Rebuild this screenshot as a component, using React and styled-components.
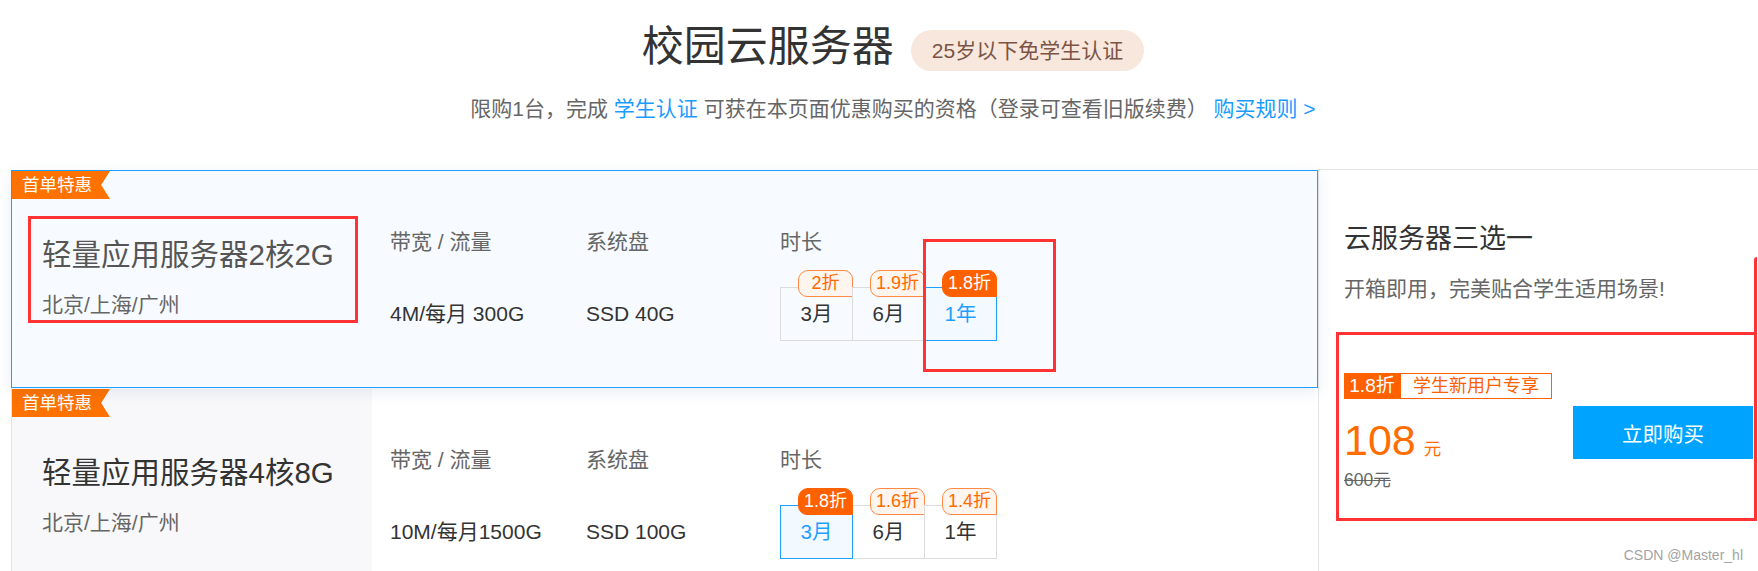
import React from 'react'
import styled, { createGlobalStyle } from 'styled-components'

const GlobalStyle = createGlobalStyle`
  html, body {
    margin: 0;
    padding: 0;
    background: #fff;
    overflow: hidden;
  }
  body {
    font-family: "Liberation Sans", "Noto Sans CJK SC", sans-serif;
    color: #333;
  }
`

const Page = styled.div`
  position: relative;
  width: 1775px;
  height: 571px;
  padding-left: 11px;
  box-sizing: border-box;
`

const Header = styled.header`
  padding-top: 22px;
  text-align: center;
`

const TitleRow = styled.div`
  display: flex;
  justify-content: center;
  align-items: center;
  gap: 17px;
  height: 50px;
`

const Title = styled.h1`
  margin: 0;
  font-size: 42px;
  font-weight: 400;
  line-height: 50px;
  color: #333;
`

const AgeBadge = styled.span`
  margin-top: 6px;
  height: 41px;
  line-height: 41px;
  padding: 0 21px;
  border-radius: 21px;
  background: #f8e7dd;
  color: #7b5444;
  font-size: 21px;
`

const Notice = styled.p`
  margin: 24px 0 0;
  font-size: 21px;
  line-height: 26px;
  color: #666;
`

const Link = styled.a`
  color: #1a9bff;
  text-decoration: none;
`

const Main = styled.div`
  display: flex;
  margin-top: 47px;
`

const CardList = styled.div`
  width: 1307px;
  flex-shrink: 0;
  padding-top: 1px;
`

const Card = styled.div`
  position: relative;
  z-index: ${p => (p.$active ? 1 : 0)};
  height: 218px;
  box-sizing: border-box;
  display: grid;
  grid-template-columns: 360px 196px 194px 1fr;
  border: 1px solid ${p => (p.$active ? '#1f9fff' : 'transparent')};
  border-left-color: ${p => (p.$active ? '#1f9fff' : '#e3e3e3')};
  background: ${p => (p.$active ? '#f7fbff' : '#fff')};
  box-shadow: ${p => (p.$active ? '0 4px 14px rgba(30, 80, 140, 0.10)' : 'none')};
`

const PromoTag = styled.div`
  position: absolute;
  top: 0;
  left: 0;
  width: 98px;
  height: 28px;
  box-sizing: border-box;
  padding-left: 10px;
  line-height: 28px;
  font-size: 17.5px;
  color: #fff;
  background: #ff7200;
  clip-path: polygon(0 0, 100% 0, 91% 50%, 100% 100%, 0 100%);
`

const Info = styled.div`
  padding: 65px 0 0 30px;
  background: ${p => (p.$active ? 'transparent' : '#f8f8fa')};
`

const ProductName = styled.div`
  font-size: 29.5px;
  line-height: 38px;
  color: ${p => (p.$active ? '#555' : '#333')};
  white-space: nowrap;
`

const Region = styled.div`
  margin-top: 18px;
  font-size: 21px;
  line-height: 26px;
  color: #666;
`

const Spec = styled.div`
  padding: 58px 0 0 18px;
`

const SpecLabel = styled.div`
  font-size: 21px;
  line-height: 26px;
  color: #666;
  white-space: nowrap;
`

const SpecValue = styled.div`
  margin-top: 46px;
  font-size: 21px;
  line-height: 26px;
  color: #333;
  white-space: nowrap;
`

const Periods = styled.div`
  display: flex;
  margin-top: 32px;
`

const Period = styled.div`
  position: relative;
  z-index: ${p => (p.$selected ? 1 : 0)};
  width: 73px;
  height: 54px;
  box-sizing: border-box;
  margin-left: -1px;
  border: 1px solid ${p => (p.$selected ? '#1f9fff' : '#dcdcdc')};
  background: ${p => (p.$selected ? '#f3faff' : 'transparent')};
  color: ${p => (p.$selected ? '#1f9fff' : '#333')};
  font-size: 20.5px;
  line-height: 52px;
  text-align: center;

  &:first-child {
    margin-left: 0;
  }
`

const Discount = styled.span`
  position: absolute;
  top: -18px;
  right: -1px;
  min-width: 55px;
  height: 27px;
  box-sizing: border-box;
  padding: 0 5px;
  border: 1px solid ${p => (p.$best ? '#ff6000' : '#ff8a45')};
  border-radius: 10px 9px 0 9px;
  background: ${p => (p.$best ? '#ff6000' : '#fff5ef')};
  color: ${p => (p.$best ? '#fff' : '#ff6a00')};
  font-size: 18px;
  line-height: 25px;
  text-align: center;
`

const Mark = styled.div`
  position: absolute;
  left: ${p => p.$left}px;
  top: ${p => p.$top}px;
  width: ${p => p.$w}px;
  height: ${p => p.$h}px;
  box-sizing: border-box;
  border: 3px solid #f33;
  pointer-events: none;
  z-index: 3;
`

const Side = styled.aside`
  flex: 1;
  border-top: 1px solid #e5e5e5;
  border-left: 1px solid #e5e5e5;
  padding: 51px 0 0 25px;
`

const SideTitle = styled.div`
  font-size: 27px;
  line-height: 36px;
  color: #333;
`

const SideText = styled.div`
  margin-top: 19px;
  font-size: 21px;
  line-height: 26px;
  color: #666;
`

const Offer = styled.div`
  position: relative;
  display: flex;
  justify-content: space-between;
  align-items: flex-start;
  width: 421px;
  height: 189px;
  box-sizing: border-box;
  margin: 30px 0 0 -8px;
  padding: 38px 1px 0 5px;
  border: 3px solid #f33;

  &::after {
    content: '';
    position: absolute;
    right: -3px;
    top: -78px;
    width: 3px;
    height: 78px;
    background: #f33;
    border-top-left-radius: 4px;
  }
`

const OfferTags = styled.div`
  display: flex;
  height: 26px;
`

const Rate = styled.span`
  width: 56px;
  background: #ff6000;
  color: #fff;
  font-size: 19px;
  line-height: 26px;
  text-align: center;
`

const Audience = styled.span`
  padding: 0 12px;
  border: 1px solid #ff6000;
  color: #ff6000;
  font-size: 18px;
  line-height: 24px;
`

const Price = styled.div`
  margin-top: 20px;
  font-size: 43px;
  line-height: 42px;
  color: #ff6d00;

  small {
    margin-left: 8px;
    font-size: 17.5px;
  }
`

const OldPrice = styled.div`
  margin-top: 0;
  font-size: 17.5px;
  line-height: 20px;
  color: #666;
  text-decoration: line-through;
`

const BuyButton = styled.button`
  margin-top: 33px;
  width: 180px;
  height: 53px;
  border: 0;
  background: #00a4ff;
  color: #fff;
  font-family: inherit;
  font-size: 20.5px;
  cursor: pointer;
`

const Watermark = styled.div`
  position: absolute;
  right: 32px;
  top: 547px;
  font-family: "Liberation Sans", sans-serif;
  font-size: 14px;
  color: #a3a3a3;
`

const plans = [
  {
    name: '轻量应用服务器2核2G',
    bandwidth: '4M/每月 300G',
    disk: 'SSD 40G',
    active: true,
    periods: [
      { label: '3月', rate: '2折' },
      { label: '6月', rate: '1.9折' },
      { label: '1年', rate: '1.8折', selected: true }
    ]
  },
  {
    name: '轻量应用服务器4核8G',
    bandwidth: '10M/每月1500G',
    disk: 'SSD 100G',
    periods: [
      { label: '3月', rate: '1.8折', selected: true },
      { label: '6月', rate: '1.6折' },
      { label: '1年', rate: '1.4折' }
    ]
  }
]

function PlanCard ({ plan }) {
  return (
    <Card $active={plan.active}>
      <PromoTag>首单特惠</PromoTag>
      <Info $active={plan.active}>
        <ProductName $active={plan.active}>{plan.name}</ProductName>
        <Region>北京/上海/广州</Region>
      </Info>
      <Spec>
        <SpecLabel>带宽 / 流量</SpecLabel>
        <SpecValue>{plan.bandwidth}</SpecValue>
      </Spec>
      <Spec>
        <SpecLabel>系统盘</SpecLabel>
        <SpecValue>{plan.disk}</SpecValue>
      </Spec>
      <Spec>
        <SpecLabel>时长</SpecLabel>
        <Periods>
          {plan.periods.map(p => (
            <Period key={p.label} $selected={p.selected}>
              {p.label}
              <Discount $best={p.selected}>{p.rate}</Discount>
            </Period>
          ))}
        </Periods>
      </Spec>
      {/* red annotation boxes from the screenshot */}
      {plan.active && <Mark $left={16} $top={45} $w={330} $h={107} />}
      {plan.active && <Mark $left={911} $top={68} $w={133} $h={133} />}
    </Card>
  )
}

export default function App () {
  return (
    <>
      <GlobalStyle />
      <Page>
        <Header>
          <TitleRow>
            <Title>校园云服务器</Title>
            <AgeBadge>25岁以下免学生认证</AgeBadge>
          </TitleRow>
          <Notice>
            限购1台，完成 <Link>学生认证</Link> 可获在本页面优惠购买的资格（登录可查看旧版续费） <Link>购买规则 &gt;</Link>
          </Notice>
        </Header>
        <Main>
          <CardList>
            {plans.map(plan => <PlanCard key={plan.name} plan={plan} />)}
          </CardList>
          <Side>
            <SideTitle>云服务器三选一</SideTitle>
            <SideText>开箱即用，完美贴合学生适用场景!</SideText>
            <Offer>
              <div>
                <OfferTags>
                  <Rate>1.8折</Rate>
                  <Audience>学生新用户专享</Audience>
                </OfferTags>
                <Price>108<small>元</small></Price>
                <OldPrice>600元</OldPrice>
              </div>
              <BuyButton>立即购买</BuyButton>
            </Offer>
          </Side>
        </Main>
        <Watermark>CSDN @Master_hl</Watermark>
      </Page>
    </>
  )
}
